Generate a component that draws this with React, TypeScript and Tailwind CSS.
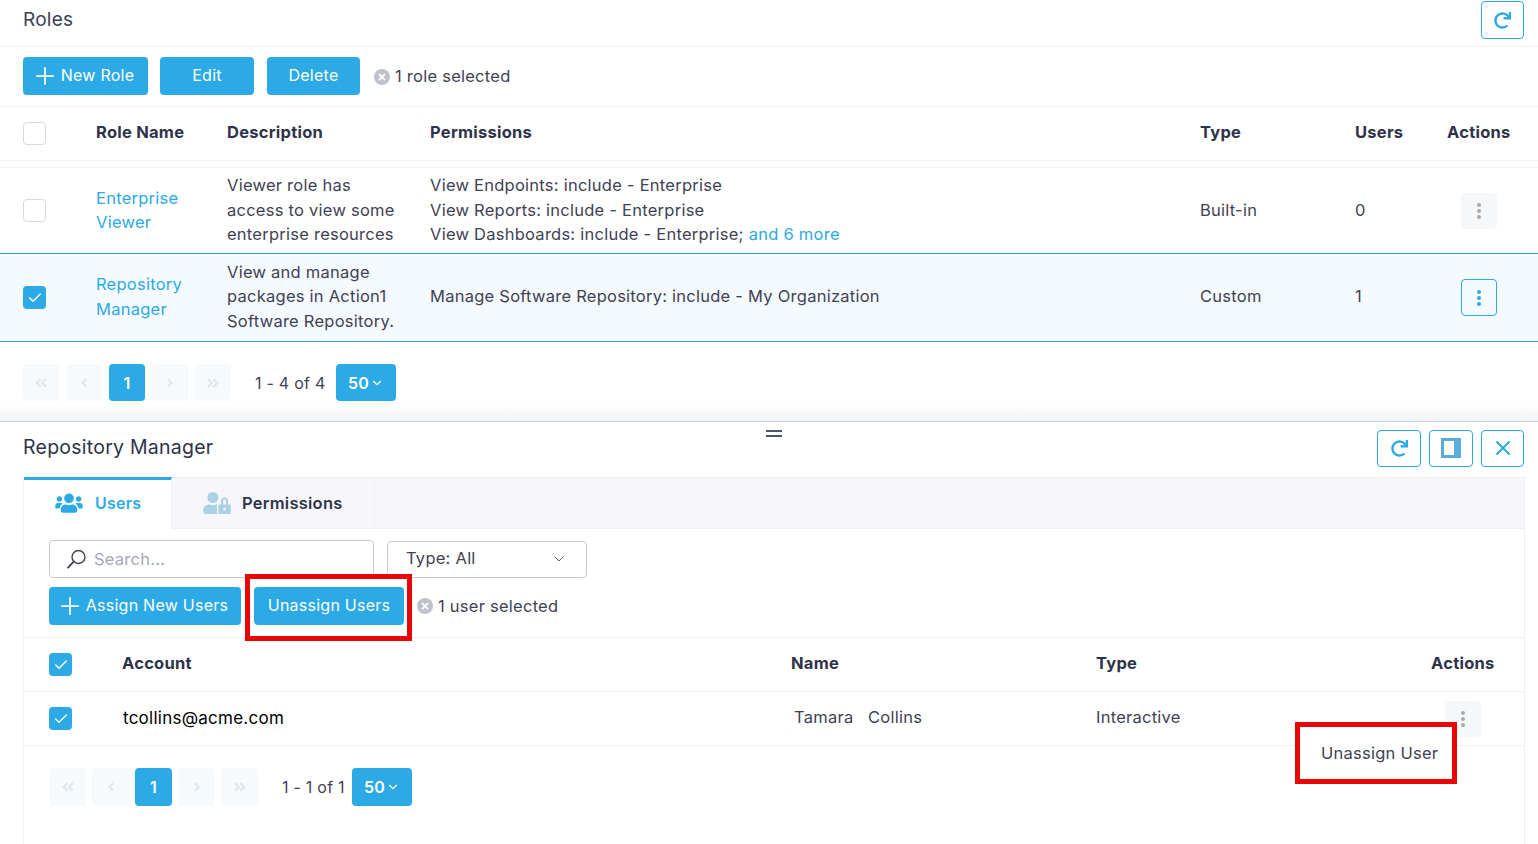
import type { ReactNode } from 'react';
import { Check, ChevronDown, Plus, X } from 'lucide-react';
import { FaAngleDoubleLeft, FaAngleDoubleRight, FaAngleLeft, FaAngleRight, FaRedo, FaTimes, FaUserLock, FaUsers } from 'react-icons/fa';

function Btn({ className, children }: { className: string; children: ReactNode }) {
  return <div className={`flex items-center justify-center rounded bg-[#2baae5] text-white text-[16px] ${className}`}>{children}</div>;
}

function OutlineBtn({ className, children }: { className: string; children: ReactNode }) {
  return <div className={`flex items-center justify-center rounded border border-[#2baae5] text-[#2baae5] bg-white ${className}`}>{children}</div>;
}

function Checkbox({ checked, className }: { checked?: boolean; className: string }) {
  return checked ? (
    <div className={`flex items-center justify-center rounded bg-[#2baae5] text-white ${className}`}><Check className="w-4 h-4" strokeWidth={2} /></div>
  ) : (
    <div className={`rounded border border-[#d5d9e2] bg-white ${className}`} />
  );
}

function Dots({ blue }: { blue?: boolean }) {
  const c = blue ? 'bg-[#2baae5]' : 'bg-[#a9a9a9]';
  return (
    <div className="flex flex-col gap-[2px]">
      <span className={`w-[4px] h-[4px] rounded-full ${c}`} />
      <span className={`w-[4px] h-[4px] rounded-full ${c}`} />
      <span className={`w-[4px] h-[4px] rounded-full ${c}`} />
    </div>
  );
}

function Cleared({ text }: { text: string }) {
  return (
    <div className="flex items-center text-[#3f4254]">
      <span className="flex items-center justify-center w-4 h-4 rounded-full bg-[#bfc1cd] text-white"><FaTimes className="w-2.5 h-2.5" /></span>
      <span className="ml-[5px]">{text}</span>
    </div>
  );
}

function PlusIcon() {
  return <Plus className="w-7 h-7 -mx-[6px] translate-y-px" strokeWidth={1.5} />;
}

// circle top right, handle running to the bottom left
function SearchIcon() {
  return (
    <svg viewBox="0 0 21 21" className="w-[21px] h-[21px] text-[#3f4254]" fill="none" stroke="currentColor" strokeWidth="1.4">
      <circle cx="12.5" cy="8" r="6.5" />
      <path d="M7.8 12.6 2 18.6" strokeWidth="1.8" strokeLinecap="round" />
    </svg>
  );
}

function Pager({ size, gap, label, labelMl, labelW }: { size: string; gap: string; label: string; labelMl: string; labelW: string }) {
  const cell = `flex items-center justify-center rounded bg-[#f7fafc] text-[#dfe7ee] ${size}`;
  return (
    <div className={`flex items-center ${gap}`}>
      <div className={cell}><FaAngleDoubleLeft className="w-3.5 h-3.5" /></div>
      <div className={cell}><FaAngleLeft className="w-3.5 h-3.5" /></div>
      <Btn className={`${size} font-semibold`}>1</Btn>
      <div className={cell}><FaAngleRight className="w-3.5 h-3.5" /></div>
      <div className={cell}><FaAngleDoubleRight className="w-3.5 h-3.5" /></div>
      <span className={`text-[16px] text-[#3f4254] ${labelMl} ${labelW}`}>{label}</span>
      <Btn className="w-[60px] h-full font-semibold">50<ChevronDown className="w-3.5 h-3.5 ml-[1px]" /></Btn>
    </div>
  );
}

export default function App() {
  const topCols = 'grid grid-cols-[73px_131px_203px_770px_155px_92px_1fr] items-center pl-[23px]';
  const subCols = 'grid grid-cols-[73px_669px_305px_1fr_93px] items-center pl-[25px]';
  return (
    <div className="relative w-[1538px] h-[844px] overflow-hidden bg-white text-[16.5px] text-[#3f4254] [font-family:Inter,'Liberation_Sans',sans-serif] tracking-[0.015em]">
      <div className="flex items-center justify-between h-[47px] pl-[23px] pr-[14px] border-b border-[#eff0f4]">
        <span className="text-[19px] -mt-[5px] text-[#3a3f55]">Roles</span>
        <OutlineBtn className="w-[43px] h-[38px] -mt-[7px]"><FaRedo className="w-[17px] h-[17px] translate-y-px" /></OutlineBtn>
      </div>
      <div className="flex items-center h-[60px] pb-[2px] pl-[23px] border-b border-[#eff0f4]">
        <Btn className="w-[125px] h-[38px] gap-[8px] pb-[2px]"><PlusIcon />New Role</Btn>
        <Btn className="w-[94px] h-[38px] ml-[12px] pb-[1px]">Edit</Btn>
        <Btn className="w-[93px] h-[38px] ml-[13px] pb-[1px]">Delete</Btn>
        <div className="ml-[14px] pt-[2px]"><Cleared text="1 role selected" /></div>
      </div>
      <div className={`${topCols} h-[54px] border-b border-[#eff0f4] font-bold text-[#2f3349] [&>span]:pb-[2px]`}>
        <Checkbox className="w-[23px] h-[23px]" />
        <span>Role Name</span>
        <span>Description</span>
        <span>Permissions</span>
        <span>Type</span>
        <span>Users</span>
        <span>Actions</span>
      </div>
      <div className="h-[7px] border-b border-[#eff0f4]" />
      <div className={`${topCols} h-[86px] leading-[24.5px] border-b border-[#2f9fd8] [&>span]:pb-[1px]`}>
        <Checkbox className="w-[23px] h-[23px]" />
        <span className="text-[#2baae5]">Enterprise<br />Viewer</span>
        <span>Viewer role has<br />access to view some<br />enterprise resources</span>
        <span>View Endpoints: include - Enterprise<br />View Reports: include - Enterprise<br />View Dashboards: include - Enterprise; <span className="text-[#2baae5]">and 6 more</span></span>
        <span>Built-in</span>
        <span>0</span>
        <div className="flex items-center justify-center w-9 h-9 ml-[14px] rounded bg-[#f5f7f9]"><Dots /></div>
      </div>
      <div className={`${topCols} h-[88px] leading-[24.5px] bg-[#f5fafe] border-b border-[#2f9fd8] [&>span]:pb-[2px]`}>
        <Checkbox checked className="w-[23px] h-[23px]" />
        <span className="text-[#2baae5]">Repository<br />Manager</span>
        <span>View and manage<br />packages in Action1<br />Software Repository.</span>
        <span>Manage Software Repository: include - My Organization</span>
        <span>Custom</span>
        <span>1</span>
        <OutlineBtn className="w-9 h-[37px] ml-[14px] !bg-transparent"><Dots blue /></OutlineBtn>
      </div>
      <div className="relative h-[80px] pl-[23px] pt-[22px] border-b border-[#ccd3db]">
        <div className="absolute inset-x-0 bottom-0 h-[16px] bg-gradient-to-b from-white to-[#f1f2f4]" />
        <div className="relative h-[37px]">
          <Pager size="w-9 h-[37px]" gap="gap-[7px] h-[37px]" label="1 - 4 of 4" labelMl="ml-[17px]" labelW="w-[74px]" />
        </div>
      </div>

      <div className="flex items-center justify-between h-[55px] pl-[23px] pr-[14px]">
        <span className="text-[19.5px] -mt-[3px] text-[#2f3349]">Repository Manager</span>
        <div className="flex gap-2 -mt-[3px]">
          <OutlineBtn className="w-[44px] h-[37px]"><FaRedo className="w-[17px] h-[17px]" /></OutlineBtn>
          <OutlineBtn className="w-[44px] h-[37px]">
            <span className="block w-[20px] h-[20px] border-[3px] border-r-[7px] border-[#5aade0] bg-white" />
          </OutlineBtn>
          <OutlineBtn className="w-[43px] h-[37px]"><X className="w-6 h-6" strokeWidth={2} /></OutlineBtn>
        </div>
      </div>

      <div className="ml-[23px] mr-[13px] h-[367px] border-l border-r border-[#eff0f4]">
        <div className="flex h-[52px] bg-[#f7f7fb] border-t border-b border-[#eff0f4]">
          <div className="flex items-center w-[148px] -mt-px pl-[31px] pb-[3px] bg-white border-t-[3px] border-[#2baae5] border-r border-r-[#eff0f4] h-[52px] font-semibold text-[16px] text-[#2baae5]">
            <FaUsers className="w-[28px] h-[22px]" />
            <span className="ml-[12px]">Users</span>
          </div>
          <div className="flex items-center w-[203px] pl-[31px] border-r border-[#eff0f4] font-semibold text-[#2f3349]">
            <FaUserLock className="w-[28px] h-[22px] text-[#acd0e4]" />
            <span className="ml-[11px]">Permissions</span>
          </div>
        </div>
        <div className="flex items-center pl-[25px] mt-[11px]">
          <div className="flex items-center w-[325px] h-[38px] pl-[16px] rounded border border-[#c9c9d6]">
            <SearchIcon />
            <span className="ml-[7px] text-[#a5a8b5]">Search...</span>
          </div>
          <div className="flex items-center justify-between w-[200px] h-[37px] ml-[13px] pl-[18px] pr-[19px] pb-[2px] rounded border border-[#c9c9d6]">
            <span>Type: All</span>
            <ChevronDown className="w-4 h-4 translate-y-px" strokeWidth={1.25} />
          </div>
        </div>
        <div className="flex items-center h-[38px] pl-[25px] mt-[9px]">
          <Btn className="w-[192px] h-[38px] gap-[8px] pb-[2px]"><PlusIcon />Assign New Users</Btn>
          <Btn className="w-[150px] h-[38px] ml-[13px] pb-[2px]">Unassign Users</Btn>
          <div className="ml-[13px]"><Cleared text="1 user selected" /></div>
        </div>
        <div className={`${subCols} h-[55px] mt-[12px] border-t border-b border-[#eff0f4] font-bold text-[#2f3349] [&>span]:pb-[2px]`}>
          <Checkbox checked className="w-[23px] h-[23px]" />
          <span>Account</span>
          <span>Name</span>
          <span>Type</span>
          <span>Actions</span>
        </div>
        <div className={`${subCols} h-[54px] border-b border-[#eff0f4]`}>
          <Checkbox checked className="w-[23px] h-[23px]" />
          <span className="text-black text-[17px] ml-px">tcollins@acme.com</span>
          <span className="ml-[3px] -mt-[3px] whitespace-pre">Tamara   Collins</span>
          <span className="-mt-[3px]">Interactive</span>
          <div className="flex items-center justify-center w-9 h-9 ml-[14px] rounded bg-[#f5f7f9]"><Dots /></div>
        </div>
        <div className="pl-[25px] mt-[22px] h-[38px]">
          <Pager size="w-[37px] h-[38px]" gap="gap-[6px] h-[38px]" label="1 - 1 of 1" labelMl="ml-[18px]" labelW="w-[64px]" />
        </div>
      </div>

      {/* grab handle on the splitter */}
      <div className="absolute left-[766px] top-[430px] w-[16px] h-[7px] border-t-2 border-b-2 border-[#4b5563]" />
      {/* open row menu */}
      <div className="absolute left-[1300px] top-[727px] flex items-center w-[152px] h-[52px] pl-[21px] bg-white text-[#3f4254]">Unassign User</div>
      {/* red annotation boxes */}
      <div className="absolute left-[245px] top-[574px] w-[167px] h-[67px] border-[5px] border-[#e80606]" />
      <div className="absolute left-[1295px] top-[722px] w-[162px] h-[62px] border-[5px] border-[#e80606]" />
    </div>
  );
}
